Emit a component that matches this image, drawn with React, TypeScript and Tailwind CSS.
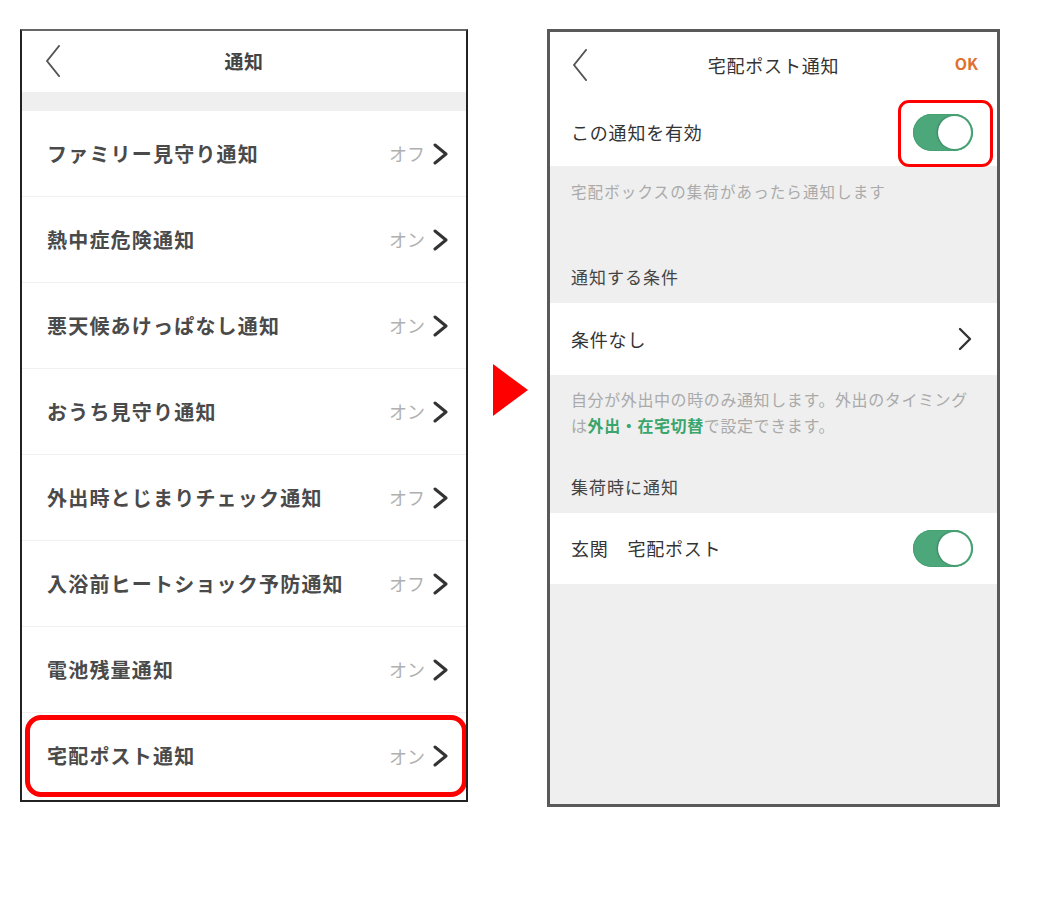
import type { ReactNode } from 'react'

const FONT = '"Noto Sans CJK JP", "Noto Sans", sans-serif'

const rows = [
  { label: 'ファミリー見守り通知', state: 'オフ' },
  { label: '熱中症危険通知', state: 'オン' },
  { label: '悪天候あけっぱなし通知', state: 'オン' },
  { label: 'おうち見守り通知', state: 'オン' },
  { label: '外出時とじまりチェック通知', state: 'オフ' },
  { label: '入浴前ヒートショック予防通知', state: 'オフ' },
  { label: '電池残量通知', state: 'オン' },
  { label: '宅配ポスト通知', state: 'オン' },
]

function BackChevron() {
  return (
    <svg width="16" height="32" viewBox="0 0 16 32" fill="none">
      <polyline points="14,1 2,16 14,31" stroke="#555" strokeWidth="2" strokeLinecap="round" strokeLinejoin="round" />
    </svg>
  )
}

function ChevronRight({ w = 15, h = 22, sw = 3 }: { w?: number; h?: number; sw?: number }) {
  return (
    <svg width={w} height={h} viewBox={`0 0 ${w} ${h}`} fill="none">
      <polyline points={`2,2 ${w - 2},${h / 2} 2,${h - 2}`} stroke="#333" strokeWidth={sw} strokeLinecap="round" strokeLinejoin="round" />
    </svg>
  )
}

function Toggle() {
  return (
    <div className="w-[60px] h-[37px] rounded-full bg-[#4ca87b] flex items-center justify-end pr-[2px] shadow-[inset_0_0_0_1px_#45a072]">
      <div className="w-[33px] h-[33px] rounded-full bg-white shadow-[-1px_0_2px_rgba(0,0,0,0.25)]" />
    </div>
  )
}

function Highlight({ className }: { className: string }) {
  return <div className={`absolute border-[#ff0000] pointer-events-none ${className}`} />
}

function LeftPanel() {
  return (
    <div className="w-[448px] h-[773px] border-2 border-[#222] border-t-[#666] bg-white flex flex-col overflow-hidden">
      <div className="h-[61px] relative flex items-center justify-center shrink-0">
        <div className="absolute left-[23px] top-[14px]">
          <BackChevron />
        </div>
        <span className="text-[19px] font-bold text-[#444] tracking-[0.5px]">通知</span>
      </div>
      <div className="h-[19px] bg-[#efefef] shrink-0" />
      {rows.map((r, i) => (
        <div
          key={r.label}
          className={`relative h-[86px] shrink-0 flex items-center pl-[25px] pr-[18px] ${i < rows.length - 1 ? 'border-b border-[#f1f1f1]' : ''}`}
        >
          <span className="flex-1 text-[20px] font-bold text-[#4a4a4a] tracking-[1.2px]">{r.label}</span>
          <span className="text-[18px] text-[#b0b0b0] mr-[8px]">{r.state}</span>
          <ChevronRight />
          {i === rows.length - 1 && (
            <Highlight className="left-[3px] right-[-1px] top-[2px] bottom-[2px] border-[5px] rounded-[16px]" />
          )}
        </div>
      ))}
    </div>
  )
}

function SectionHeader({ children, h }: { children: ReactNode; h: string }) {
  return (
    <div className={`${h} flex items-center pl-[21px] text-[17px] text-[#444] tracking-[1px]`}>{children}</div>
  )
}

function RightPanel() {
  return (
    <div className="w-[453px] h-[778px] border-[3px] border-[#595959] bg-[#efefef] flex flex-col overflow-hidden">
      <div className="h-[66px] bg-white relative flex items-center justify-center shrink-0">
        <div className="absolute left-[22px] top-[17px]">
          <BackChevron />
        </div>
        <span className="text-[18px] text-[#333] tracking-[0.8px]">宅配ポスト通知</span>
        <span className="absolute right-[19px] top-[19px] text-[16px] font-bold text-[#e0702f]">OK</span>
      </div>
      <div className="h-[68px] bg-white relative flex items-center pl-[21px] pr-[24px] shrink-0">
        <span className="flex-1 text-[18px] text-[#333] tracking-[0.8px]">この通知を有効</span>
        <Toggle />
        <Highlight className="right-[4px] top-[2px] w-[95px] h-[67px] border-[3px] rounded-[11px]" />
      </div>
      <div className="h-[85px] pt-[14px] pl-[21px] text-[15.5px] leading-[22px] text-[#aaa] tracking-[1.1px] shrink-0">
        宅配ボックスの集荷があったら通知します
      </div>
      <SectionHeader h="h-[52px]">通知する条件</SectionHeader>
      <div className="h-[72px] bg-white flex items-center pl-[21px] pr-[25px] shrink-0">
        <span className="flex-1 text-[18px] text-[#333] tracking-[0.8px]">条件なし</span>
        <ChevronRight w={14} h={24} sw={2.4} />
      </div>
      <div className="h-[85px] pt-[11px] pl-[21px] pr-[10px] text-[16px] leading-[26px] text-[#aaa] tracking-[0.6px] whitespace-nowrap shrink-0">
        自分が外出中の時のみ通知します。外出のタイミング
        <br />
        は<span className="text-[#3aa56c] font-bold">外出・在宅切替</span>で設定できます。
      </div>
      <SectionHeader h="h-[53px]">集荷時に通知</SectionHeader>
      <div className="h-[71px] bg-white flex items-center pl-[21px] pr-[24px] shrink-0">
        <span className="flex-1 text-[18px] text-[#333] tracking-[0.8px]">玄関　宅配ポスト</span>
        <Toggle />
      </div>
    </div>
  )
}

export default function App() {
  return (
    <div className="w-[1058px] h-[906px] bg-white flex items-start pl-[20px] pt-[29px]" style={{ fontFamily: FONT }}>
      <LeftPanel />
      <svg width="36" height="54" viewBox="0 0 36 54" className="ml-[25px] mr-[18px] mt-[335px]">
        <polygon points="0,0 35,26 0,52" fill="#ff0000" />
      </svg>
      <RightPanel />
    </div>
  )
}
